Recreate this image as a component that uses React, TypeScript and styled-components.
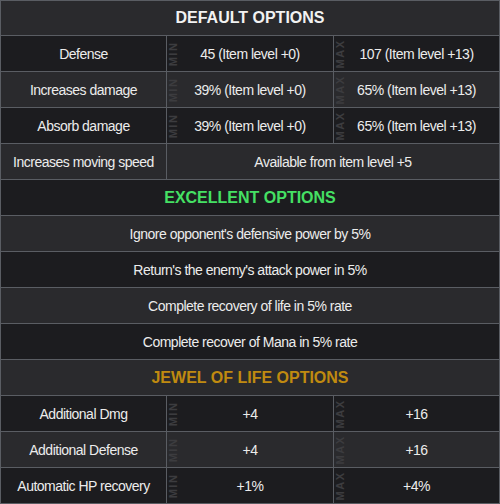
import { createGlobalStyle, styled } from 'styled-components';

const GlobalStyle = createGlobalStyle`
  html, body {
    margin: 0;
    padding: 0;
    background: #1c1c1f;
  }
  body {
    font-family: 'Liberation Sans', Arial, sans-serif;
  }
`;

const Table = styled.div`
  width: 500px;
  box-sizing: border-box;
  border: 1px solid #5a5d63;
  display: flex;
  flex-direction: column;
`;

const Row = styled.div<{ $light: boolean; $first?: boolean }>`
  display: grid;
  grid-template-columns: 165px 167px 166px;
  height: ${(p) => (p.$first ? '34px' : '35px')};
  border-top: ${(p) => (p.$first ? 'none' : '1px solid #5a5d63')};
  background: ${(p) => (p.$light ? '#2a2a2d' : '#1c1c1f')};
`;

const Cell = styled.div<{ $span?: number; $divider?: boolean }>`
  position: relative;
  grid-column: span ${(p) => p.$span ?? 1};
  border-left: ${(p) => (p.$divider ? '1px solid #5a5d63' : 'none')};
  display: flex;
  align-items: center;
  justify-content: center;
  font-size: 14px;
  letter-spacing: -0.5px;
  color: #ececec;
  white-space: nowrap;
`;

const Heading = styled(Cell)<{ $color: string }>`
  font-size: 16px;
  letter-spacing: 0;
  font-weight: bold;
  color: ${(p) => p.$color};
`;

const Tag = styled.span`
  position: absolute;
  left: 1px;
  top: 50%;
  writing-mode: vertical-rl;
  transform: translateY(-50%) rotate(180deg);
  font-size: 11px;
  line-height: 11px;
  font-weight: bold;
  letter-spacing: 1.5px;
  color: #3c3c3f;
`;

type Stat = { label: string; min: string; max: string };

const defaults: Stat[] = [
  { label: 'Defense', min: '45 (Item level +0)', max: '107 (Item level +13)' },
  { label: 'Increases damage', min: '39% (Item level +0)', max: '65% (Item level +13)' },
  { label: 'Absorb damage', min: '39% (Item level +0)', max: '65% (Item level +13)' },
];

const excellent = [
  "Ignore opponent's defensive power by 5%",
  "Return's the enemy's attack power in 5%",
  'Complete recovery of life in 5% rate',
  'Complete recover of Mana in 5% rate',
];

const jewel: Stat[] = [
  { label: 'Additional Dmg', min: '+4', max: '+16' },
  { label: 'Additional Defense', min: '+4', max: '+16' },
  { label: 'Automatic HP recovery', min: '+1%', max: '+4%' },
];

const StatRow = ({ stat, light }: { stat: Stat; light: boolean }) => (
  <Row $light={light}>
    <Cell>{stat.label}</Cell>
    <Cell $divider>
      <Tag>MIN</Tag>
      {stat.min}
    </Cell>
    <Cell $divider>
      <Tag>MAX</Tag>
      {stat.max}
    </Cell>
  </Row>
);

export default function App() {
  return (
    <>
      <GlobalStyle />
      <Table>
        <Row $light $first>
          <Heading $span={3} $color="#f2f2f2">DEFAULT OPTIONS</Heading>
        </Row>
        {defaults.map((s, i) => (
          <StatRow key={s.label} stat={s} light={i % 2 === 1} />
        ))}
        <Row $light>
          <Cell>Increases moving speed</Cell>
          <Cell $divider $span={2}>Available from item level +5</Cell>
        </Row>
        <Row $light={false}>
          <Heading $span={3} $color="#45e064">EXCELLENT OPTIONS</Heading>
        </Row>
        {excellent.map((t, i) => (
          <Row key={t} $light={i % 2 === 0}>
            <Cell $span={3}>{t}</Cell>
          </Row>
        ))}
        <Row $light>
          <Heading $span={3} $color="#c08a10">JEWEL OF LIFE OPTIONS</Heading>
        </Row>
        {jewel.map((s, i) => (
          <StatRow key={s.label} stat={s} light={i % 2 === 1} />
        ))}
      </Table>
    </>
  );
}
